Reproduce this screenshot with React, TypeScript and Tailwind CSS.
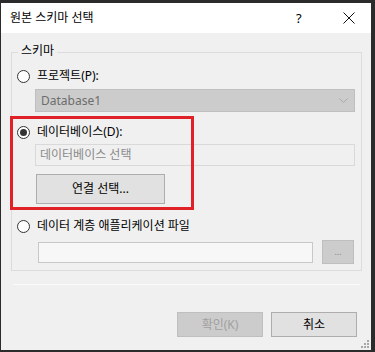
import React from 'react';

const font = "font-['Noto_Sans','Noto_Sans_CJK_KR',sans-serif]";

function Radio({ checked, label }: { checked?: boolean; label: string }) {
  return (
    <div className="flex items-center h-[16px] pl-[5px] gap-[7px]">
      <span className="w-[13px] h-[13px] rounded-full border border-[#333333] bg-white flex items-center justify-center">
        {checked && <span className="w-[7px] h-[7px] rounded-full bg-[#333333]" />}
      </span>
      <span className="text-[12px] leading-[16px] text-black">{label}</span>
    </div>
  );
}

export default function App() {
  return (
    <div className={`w-[375px] h-[352px] bg-[#2b2b2b] pt-[3px] pl-[1px] pr-[4px] pb-[2px] flex flex-col ${font}`}>
      {/* title bar */}
      <div className="h-[30px] bg-white flex items-center pl-[9px]">
        <span className="text-[12px] leading-[16px] text-black flex-1">원본 스키마 선택</span>
        <span className="text-[13px] leading-[16px] text-black w-[10px] mr-[37px]">?</span>
        <svg width="12" height="12" viewBox="0 0 12 12" className="mr-[16px]">
          <path d="M0.5 0.5 L11.5 11.5 M11.5 0.5 L0.5 11.5" stroke="#111" strokeWidth="1" fill="none" />
        </svg>
      </div>

      {/* body */}
      <div className="relative flex-1 bg-[#f0f0f0] flex flex-col">
        <div className="mt-[19px] ml-[10px] mr-[9px] border border-[#dcdcdc] flex flex-col pb-[6px]">
          <span className="-mt-[10px] ml-[6px] px-[3px] w-fit bg-[#f0f0f0] text-[12px] leading-[16px] text-black">스키마</span>

          <div className="mt-[9px]">
            <Radio label="프로젝트(P):" />
          </div>
          <div className="mt-[5px] ml-[23px] w-[320px] h-[23px] bg-[#cccccc] border border-[#bfbfbf] flex items-center pl-[5px] pr-[6px]">
            <span className="flex-1 text-[12px] leading-[16px] text-[#6d6d6d]">Database1</span>
            <svg width="9" height="5" viewBox="0 0 9 5">
              <path d="M0.5 0.5 L4.5 4.5 L8.5 0.5" stroke="#a8a8a8" fill="none" />
            </svg>
          </div>

          <div className="mt-[12px]">
            <Radio checked label="데이터베이스(D):" />
          </div>
          <div className="mt-[4px] ml-[23px] w-[320px] h-[22px] border border-[#d9d9d9] flex items-center pl-[4px]">
            <span className="text-[12px] leading-[16px] text-[#8a8a8a]">데이터베이스 선택</span>
          </div>
          <button className="mt-[8px] ml-[24px] w-[129px] h-[30px] bg-[#e1e1e1] border border-[#adadad] text-[12px] leading-[16px] text-black">
            연결 선택...
          </button>

          <div className="mt-[14px]">
            <Radio label="데이터 계층 애플리케이션 파일" />
          </div>
          <div className="mt-[6px] ml-[26px] flex items-center gap-[9px]">
            <div className="w-[275px] h-[21px] border border-[#c8c8c8] bg-[#f7f7f7]" />
            <div className="w-[32px] h-[24px] bg-[#cccccc] border border-[#bfbfbf] flex items-center justify-center text-[9px] leading-[10px] text-[#8a8a8a]">
              ...
            </div>
          </div>
        </div>
        <div className="mt-[13px] ml-[12px] mr-[11px] h-px bg-[#fafafa]" />

        <div className="mt-[27px] flex justify-end gap-[8px] mr-[14px]">
          <button className="w-[86px] h-[25px] bg-[#cccccc] border border-[#bfbfbf] text-[12px] leading-[16px] text-[#a0a0a0]">
            확인(K)
          </button>
          <button className="w-[86px] h-[25px] bg-[#e1e1e1] border border-[#adadad] text-[12px] leading-[16px] text-black">
            취소
          </button>
        </div>

        {/* red highlight annotation */}
        <div className="absolute left-[9px] top-[83px] w-[184px] h-[94px] border-[3px] border-[#e02127] pointer-events-none" />

        {/* resize grip */}
        <svg width="10" height="10" viewBox="0 0 10 10" className="absolute right-[1px] bottom-[1px]">
          <rect x="7" y="1" width="2" height="2" fill="#a8a8a8" />
          <rect x="4" y="4" width="2" height="2" fill="#a8a8a8" />
          <rect x="7" y="4" width="2" height="2" fill="#a8a8a8" />
          <rect x="1" y="7" width="2" height="2" fill="#a8a8a8" />
          <rect x="4" y="7" width="2" height="2" fill="#a8a8a8" />
          <rect x="7" y="7" width="2" height="2" fill="#a8a8a8" />
        </svg>
      </div>
    </div>
  );
}
